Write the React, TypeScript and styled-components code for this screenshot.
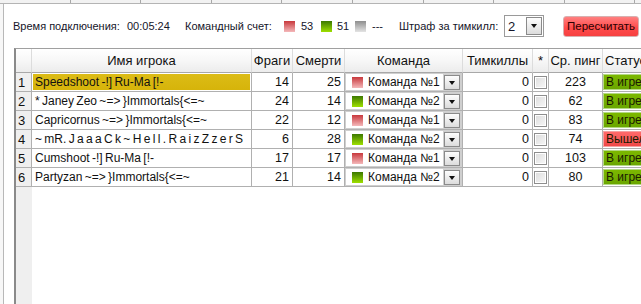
import styled, { createGlobalStyle } from 'styled-components'

type Player = {
  name: string
  frags: number
  deaths: number
  team: 1 | 2
  teamKills: number
  ping: number
  online: boolean
}

const players: Player[] = [
  { name: 'Speedshoot -!] Ru-Ma [!-', frags: 14, deaths: 25, team: 1, teamKills: 0, ping: 223, online: true },
  { name: '* Janey Zeo ~=> }Immortals{<=~', frags: 24, deaths: 14, team: 2, teamKills: 0, ping: 62, online: true },
  { name: 'Capricornus ~=> }Immortals{<=~', frags: 22, deaths: 12, team: 1, teamKills: 0, ping: 83, online: true },
  { name: '~ mR. J a a a C k ~ H e l l . R a i z Z z e r S', frags: 6, deaths: 28, team: 2, teamKills: 0, ping: 74, online: false },
  { name: 'Cumshoot -!] Ru-Ma [!-', frags: 17, deaths: 17, team: 1, teamKills: 0, ping: 103, online: true },
  { name: 'Partyzan ~=> }Immortals{<=~', frags: 21, deaths: 14, team: 2, teamKills: 0, ping: 80, online: true },
]

// column widths incl. the right grid line
const COLS = '16px 220px 41px 52px 118px 70px 16px 54px 90px'

const swatches = {
  red: 'linear-gradient(#c8383c, #f4b8ba)',
  green: 'linear-gradient(#3c7800, #9ee000)',
  gray: 'linear-gradient(#8e8e8e, #e4e4e4)',
}

const GlobalStyle = createGlobalStyle`
  html, body { margin: 0; padding: 0; background: #f7f7f7; }
  * { box-sizing: border-box; }
`

const Window = styled.div`
  width: 641px;
  height: 304px;
  overflow: hidden;
  display: flex;
  flex-direction: column;
  font-family: "Liberation Sans", Arial, sans-serif;
  color: #111;
`

const TabStrip = styled.div`
  display: flex;
  height: 4px;
  flex-shrink: 0;
  background: #f2f2f2;
  border-bottom: 1px solid #b4b4b4;
`

const TabCell = styled.div`
  width: 70.6px;
  flex-shrink: 0;
  border-right: 1px solid #a8a8a8;
`

const Frame = styled.div`
  flex: 1;
  display: flex;
  flex-direction: column;
  margin-left: 3px;
  border-left: 1px solid #b8b8b8;
  background: #fff;
  min-height: 0;
`

const Toolbar = styled.div`
  display: flex;
  align-items: center;
  height: 44px;
  flex-shrink: 0;
  padding-left: 9px;
  font-size: 11px;
  color: #15152a;
`

const Label = styled.span<{ $w: number; $ml?: number }>`
  width: ${(p) => p.$w}px;
  margin-left: ${(p) => p.$ml ?? 0}px;
  white-space: nowrap;
  flex-shrink: 0;
`

const Swatch = styled.span<{ $bg: string; $ml: number }>`
  width: 11px;
  height: 11px;
  margin-left: ${(p) => p.$ml}px;
  background: ${(p) => p.$bg};
  flex-shrink: 0;
`

const Select = styled.div`
  display: flex;
  width: 40px;
  height: 22px;
  margin-left: 7px;
  border: 1px solid #9a9a9a;
  background: #fff;
  flex-shrink: 0;
`

const SelectValue = styled.span`
  flex: 1;
  padding: 3px 0 0 3px;
  font-size: 13px;
`

const DropButton = styled.span<{ $h: number }>`
  width: 16px;
  height: ${(p) => p.$h}px;
  margin: 1px;
  display: flex;
  align-items: center;
  justify-content: center;
  border: 1px solid #8a8a8a;
  background: linear-gradient(#fdfdfd, #dcdcdc);
  flex-shrink: 0;

  &::after {
    content: '';
    border-left: 3.5px solid transparent;
    border-right: 3.5px solid transparent;
    border-top: 4px solid #111;
  }
`

const RecalcButton = styled.button`
  width: 76px;
  height: 21px;
  margin-left: 19px;
  padding: 0;
  border: 1px solid #d8b0b0;
  border-radius: 3px;
  background: linear-gradient(#ff8080, #ff4c4c 55%, #f64040);
  font-family: inherit;
  font-size: 11.5px;
  color: #2a0000;
  flex-shrink: 0;
`

const Table = styled.div`
  flex: 1;
  display: flex;
  flex-direction: column;
  margin-left: 10px;
  border-top: 1px solid #a0a0a0;
  border-left: 2px solid #8a8a8a;
  font-size: 12px;
  min-height: 0;
`

const Row = styled.div<{ $h: number }>`
  display: grid;
  grid-template-columns: ${COLS};
  height: ${(p) => p.$h}px;
  flex-shrink: 0;
`

const HeadCell = styled.div<{ $align?: string }>`
  display: flex;
  align-items: center;
  justify-content: ${(p) => p.$align ?? 'center'};
  padding: 0 2px;
  white-space: nowrap;
  overflow: hidden;
  font-size: 13px;
  background: linear-gradient(#ffffff, #f7f7f7 50%, #ececec);
  border-right: 1px solid #dcdcdc;
  border-bottom: 1px solid #a8a8a8;
  color: #111;
`

const Cell = styled.div<{ $align?: string; $pad?: string }>`
  display: flex;
  align-items: center;
  justify-content: ${(p) => p.$align ?? 'flex-start'};
  padding: ${(p) => p.$pad ?? '0 3px'};
  white-space: nowrap;
  overflow: hidden;
  font-size: 12.5px;
  border-right: 1px solid #b0b0b0;
  border-bottom: 1px solid #b0b0b0;
  background: #fff;
`

const NumCell = styled(Cell)`
  background: #efefef;
  padding: 0 0 0 2px;
  font-size: 13px;
`

const NameText = styled.span<{ $hl: boolean }>`
  display: flex;
  align-items: center;
  height: 100%;
  width: 100%;
  padding-left: 2px;
  font-size: 12px;
  word-spacing: -1px;
  background: ${(p) => (p.$hl ? 'linear-gradient(#dcbc16, #d6b40a)' : 'transparent')};
  overflow: hidden;
`

const Combo = styled.div`
  display: flex;
  align-items: stretch;
  height: 100%;
  width: 100%;
  padding: 1px;
  background: #cfcfcf;
`

const ComboField = styled.div`
  flex: 1;
  display: flex;
  align-items: center;
  gap: 5px;
  padding-left: 6px;
  background: #fff;
  font-size: 12px;
  overflow: hidden;
`

const CheckBox = styled.span`
  width: 13px;
  height: 13px;
  border: 1px solid #8e8e8e;
  background: linear-gradient(135deg, #dcdcdc, #f8f8f8);
  box-shadow: inset 0 0 0 1px #fff;
`

const Status = styled.div<{ $online: boolean }>`
  display: flex;
  align-items: center;
  height: 100%;
  width: 100%;
  padding-left: 2px;
  font-size: 12px;
  border: 1px solid ${(p) => (p.$online ? '#b4d884' : '#f4a0a0')};
  background: ${(p) =>
    p.$online
      ? 'linear-gradient(#7cb800, #6aa600)'
      : 'linear-gradient(#ff6a6a, #f04848)'};
  color: #1a1a00;
`

const Filler = styled.div`
  flex: 1;
  display: grid;
  grid-template-columns: ${COLS};
`

const FillerNum = styled.div`
  background: #efefef;
`

export default function App() {
  return (
    <>
      <GlobalStyle />
      <Window>
        <TabStrip>
          {Array.from({ length: 10 }).map((_, i) => (
            <TabCell key={i} />
          ))}
        </TabStrip>
        <Frame>
          <Toolbar>
            <Label $w={106}>Время подключения:</Label>
            <Label $w={45} $ml={8}>00:05:24</Label>
            <Label $w={89} $ml={13}>Командный счет:</Label>
            <Swatch $bg={swatches.red} $ml={10} />
            <Label $w={12} $ml={6}>53</Label>
            <Swatch $bg={swatches.green} $ml={8} />
            <Label $w={12} $ml={5}>51</Label>
            <Swatch $bg={swatches.gray} $ml={6} />
            <Label $w={11} $ml={6}>---</Label>
            <Label $w={98} $ml={16}>Штраф за тимкилл:</Label>
            <Select>
              <SelectValue>2</SelectValue>
              <DropButton $h={18} />
            </Select>
            <RecalcButton>Пересчитать</RecalcButton>
          </Toolbar>

          <Table>
            <Row $h={24}>
              <HeadCell />
              <HeadCell>Имя игрока</HeadCell>
              <HeadCell>Фраги</HeadCell>
              <HeadCell>Смерти</HeadCell>
              <HeadCell>Команда</HeadCell>
              <HeadCell>Тимкиллы</HeadCell>
              <HeadCell>*</HeadCell>
              <HeadCell>Ср. пинг</HeadCell>
              <HeadCell $align="flex-start">Статус</HeadCell>
            </Row>
            {players.map((p, i) => (
              <Row $h={19} key={i}>
                <NumCell>{i + 1}</NumCell>
                <Cell $pad="1px">
                  <NameText $hl={i === 0}>{p.name}</NameText>
                </Cell>
                <Cell $align="flex-end">{p.frags}</Cell>
                <Cell $align="flex-end">{p.deaths}</Cell>
                <Cell $pad="0">
                  <Combo>
                    <ComboField>
                      <Swatch $bg={p.team === 1 ? swatches.red : swatches.green} $ml={0} />
                      Команда №{p.team}
                    </ComboField>
                    <DropButton $h={15} />
                  </Combo>
                </Cell>
                <Cell $align="flex-end">{p.teamKills}</Cell>
                <Cell $pad="0 0 0 1px">
                  <CheckBox />
                </Cell>
                <Cell $align="center">{p.ping}</Cell>
                <Cell $pad="1px 0">
                  <Status $online={p.online}>{p.online ? 'В игре' : 'Вышел'}</Status>
                </Cell>
              </Row>
            ))}
            <Filler>
              <FillerNum />
            </Filler>
          </Table>
        </Frame>
      </Window>
    </>
  )
}
